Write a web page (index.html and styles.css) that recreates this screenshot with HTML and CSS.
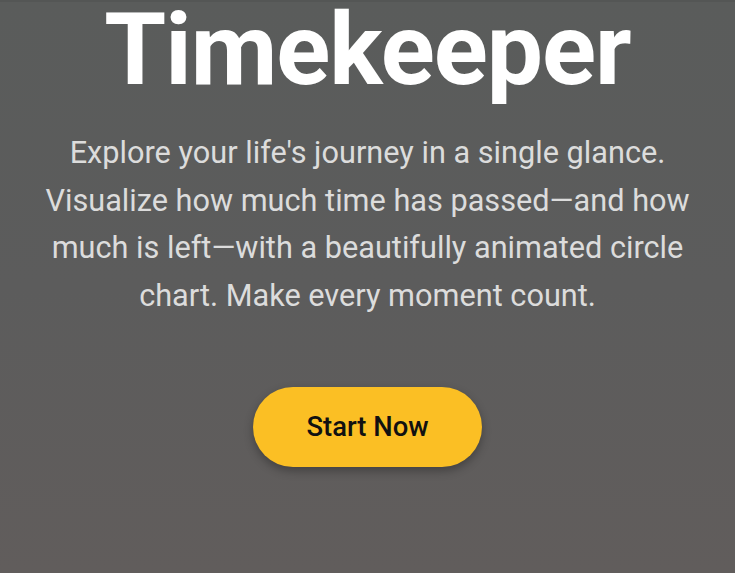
FILE: index.html
```html
<!DOCTYPE html>
<html lang="en">
<head>
<meta charset="utf-8">
<title>Timekeeper</title>
<link rel="stylesheet" href="styles.css">
</head>
<body>
<main class="hero">
  <h1 class="title">Timekeeper</h1>
  <p class="lead">Explore your life's journey in a single glance. Visualize how much time has passed—and how much is left—with a beautifully animated circle chart. Make every moment count.</p>
  <button class="cta" type="button">Start Now</button>
</main>
</body>
</html>
```
FILE: styles.css
```css
html, body {
  margin: 0;
  padding: 0;
  height: 100%;
}
body {
  background:
    linear-gradient(180deg, #545655 0, #545655 2px, transparent 2px),
    linear-gradient(180deg, #5a5c5b 0%, #5c5c5c 50%, #615d5c 100%);
  font-family: Roboto, "Liberation Sans", sans-serif;
  overflow: hidden;
}
.hero {
  display: flex;
  flex-direction: column;
  align-items: center;
  text-align: center;
  padding: 0 20px;
}
.title {
  margin: 0;
  font-size: 100px;
  line-height: 100px;
  font-weight: 700;
  color: #ffffff;
  letter-spacing: -1px;
}
.lead {
  margin: 29px 0 0;
  max-width: 680px;
  font-size: 30.7px;
  line-height: 47.5px;
  color: #dcdcdc;
}
.cta {
  margin-top: 68px;
  width: 229px;
  height: 80px;
  border: none;
  border-radius: 40px;
  background: #fbbf24;
  color: #111111;
  font-family: Roboto, "Liberation Sans", sans-serif;
  font-size: 27.4px;
  font-weight: 500;
  box-shadow: 0 4px 10px rgba(0, 0, 0, 0.3);
}
```
